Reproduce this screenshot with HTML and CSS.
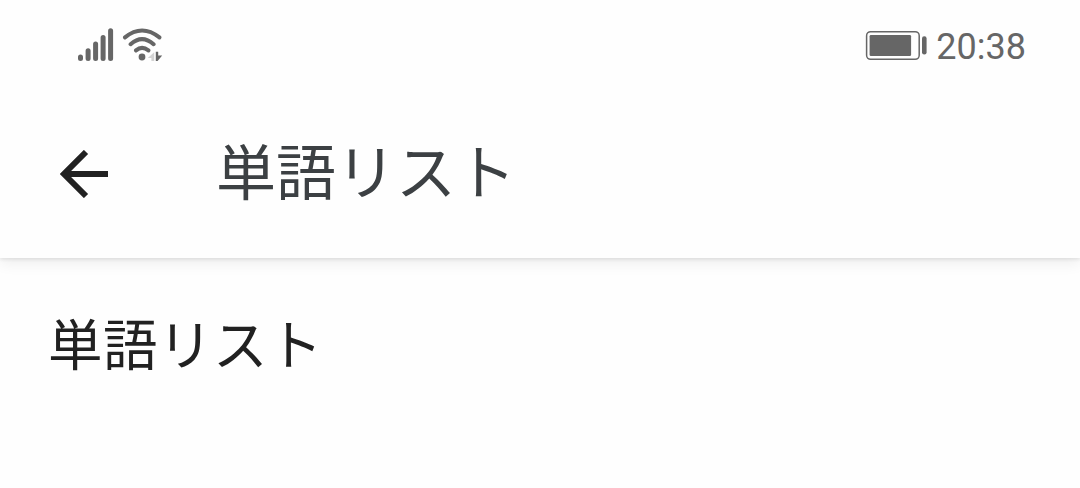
FILE: index.html
```html
<!DOCTYPE html>
<html lang="ja">
<head>
    <meta charset="UTF-8">
    <meta name="viewport" content="width=device-width, initial-scale=1.0">
    <title>単語リスト</title>
    <link rel="stylesheet" href="styles.css">
</head>
<body>
    <header class="top">
        <div class="status-bar">
            <div class="status-icons">
                <svg class="signal" width="36" height="36" viewBox="0 0 36 36">
                    <path d="M2.5 31.6v-1.6M10.1 31.6v-7.8M17.6 31.6V17.1M25.1 31.6V10.4M32.6 31.6V3.8"/>
                </svg>
                <svg class="wifi" width="42" height="36" viewBox="0 0 42 36">
                    <path class="arc" d="M4 10.4Q21 -3.4 38.4 10.4M9.6 17.2Q21 7 32.6 17.2M15 23.4Q21 18.4 27.4 23.4"/>
                    <circle cx="21" cy="30" r="3.4"/>
                    <path class="up" d="M33.2 25.2v8.8h-2.8v-3h-3.6z"/>
                    <path d="M34.8 24.8h2.4v3.8h4L36.6 34h-1.8z"/>
                </svg>
            </div>
            <div class="status-right">
                <svg class="battery" width="63" height="34" viewBox="0 0 63 34">
                    <rect class="case" x="1.6" y="3.7" width="52.6" height="27.6" rx="4"/>
                    <rect x="4.6" y="7" width="41.5" height="21" rx="1.3"/>
                    <rect x="57" y="8.2" width="4.6" height="18.2" rx="2.2"/>
                </svg>
                <span class="time">20:38</span>
            </div>
        </div>
        <nav class="app-bar">
            <a class="back" href="#" aria-label="戻る">
                <svg width="48" height="48" viewBox="0 0 48 48">
                    <path d="M26 2L4 24l22 22M4 24h44"/>
                </svg>
            </a>
            <h1>単語リスト</h1>
        </nav>
    </header>

    <main>
        <h2>単語リスト</h2>
    </main>
</body>
</html>
```

FILE: styles.css
```css
body {
    margin: 0;
    background-color: #fefefe;
    color: #212121;
    font-family: 'Noto Sans CJK JP', sans-serif;
}
.top {
    height: 258px;
    background-color: #fefefe;
    box-shadow: 0 2px 3px rgba(0, 0, 0, 0.07), 0 5px 14px rgba(0, 0, 0, 0.07);
}
.status-bar {
    display: flex;
    justify-content: space-between;
    height: 90px;
    padding: 0 54px 0 78px;
    box-sizing: border-box;
}
.status-icons {
    display: flex;
    gap: 7px;
    padding-top: 27px;
}
.status-bar svg {
    fill: #666;
}
.signal path {
    stroke: #666;
    stroke-width: 5;
    stroke-linecap: round;
}
.wifi .arc {
    fill: none;
    stroke: #666;
    stroke-width: 4;
    stroke-linecap: round;
}
.wifi .up {
    fill: #d3d3d3;
}
.status-right {
    display: flex;
    gap: 8px;
    padding-top: 28px;
}
.battery .case {
    fill: none;
    stroke: #666;
    stroke-width: 1.5;
}
.time {
    color: #666;
    font: 36px/38px Roboto, sans-serif;
}
.app-bar {
    display: flex;
    align-items: center;
    height: 168px;
    padding-left: 60px;
    box-sizing: border-box;
}
.back {
    display: flex;
    margin-right: 108px;
}
.back path {
    fill: none;
    stroke: #212121;
    stroke-width: 6;
}
h1,
h2 {
    margin: 0;
    font-weight: 400;
    white-space: nowrap;
}
h1 {
    padding-bottom: 11px;
    color: #3c4043;
    font-size: 60px;
    line-height: 80px;
}
main {
    padding: 44px 48px 0;
}
h2 {
    font-size: 54.5px;
    letter-spacing: 0.5px;
    line-height: 80px;
}
```
